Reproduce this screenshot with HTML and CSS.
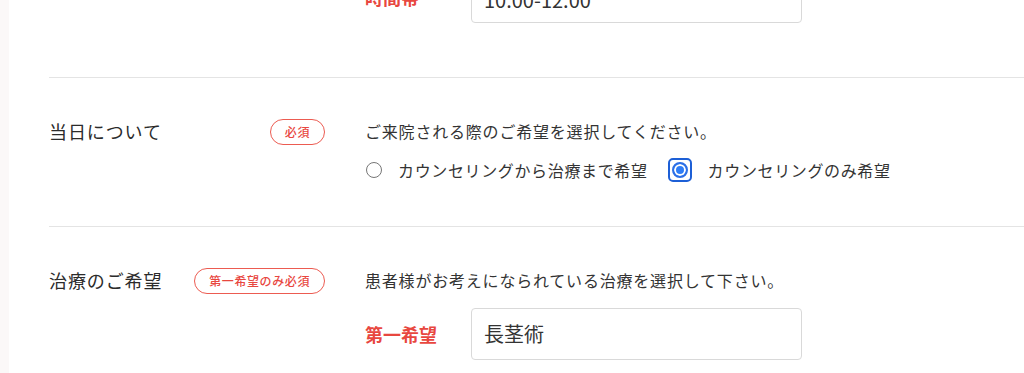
FILE: index.html
```html
<!DOCTYPE html>
<html lang="ja">
<head>
<meta charset="UTF-8">
<meta name="viewport" content="width=device-width, initial-scale=1.0">
<title>ご予約フォーム</title>
<link rel="stylesheet" href="styles.css">
</head>
<body>

<div class="form-panel">

    <!-- 希望日時 (cut off at the top) -->
    <div class="form-row form-row--first">
        <div class="row-head"></div>
        <div class="row-body">
            <div class="sub-field">
                <span class="sub-label">時間帯</span>
                <div class="text-box text-box--low">10:00-12:00</div>
            </div>
        </div>
    </div>

    <!-- 当日について -->
    <div class="form-row">
        <div class="row-head">
            <span class="row-label">当日について</span>
            <span class="badge">必須</span>
        </div>
        <div class="row-body">
            <p class="row-note">ご来院される際のご希望を選択してください。</p>
            <div class="radio-group">
                <label class="radio-option">
                    <span class="radio-mark"></span>
                    カウンセリングから治療まで希望
                </label>
                <label class="radio-option">
                    <span class="radio-focus"><span class="radio-mark is-checked"></span></span>
                    カウンセリングのみ希望
                </label>
            </div>
        </div>
    </div>

    <!-- 治療のご希望 -->
    <div class="form-row">
        <div class="row-head">
            <span class="row-label">治療のご希望</span>
            <span class="badge">第一希望のみ必須</span>
        </div>
        <div class="row-body">
            <p class="row-note">患者様がお考えになられている治療を選択して下さい。</p>
            <div class="sub-field sub-field--spaced">
                <span class="sub-label">第一希望</span>
                <div class="text-box">長茎術</div>
            </div>
        </div>
    </div>

</div>

</body>
</html>
```

FILE: styles.css
```css
/* Base */
body {
    margin: 0;
    background-color: #fbf8f8;
    font-family: "Noto Sans CJK JP", "Noto Sans", sans-serif;
    color: #333;
    overflow: hidden;
}

/* White form panel */
.form-panel {
    margin-top: -29px;
    margin-left: 9px;
    padding-left: 40px;
    background-color: #fff;
    min-height: 500px;
}

/* Rows */
.form-row {
    display: flex;
    align-items: flex-start;
    border-top: 1px solid #e4e4e4;
    padding: 40px 0 43px;
}
.form-row--first {
    border-top: none;
    padding: 0 0 54px;
}

.row-head {
    width: 276px;
    height: 27px;
    display: flex;
    align-items: center;
    justify-content: space-between;
    flex-shrink: 0;
}

.row-label {
    font-size: 18px;
    font-weight: 400;
    color: #2b2b2b;
    letter-spacing: 0.05em;
    line-height: 27px;
}

.badge {
    height: 24px;
    line-height: 24px;
    padding: 0 14px;
    border: 1.5px solid #ec5b51;
    border-radius: 14px;
    color: #e8473f;
    font-size: 12px;
    font-weight: 500;
    letter-spacing: 0.05em;
}

.row-body {
    margin-left: 40px;
}

.row-note {
    margin: 0;
    font-size: 16px;
    line-height: 27px;
    letter-spacing: 0.05em;
}

/* Radio buttons */
.radio-group {
    display: flex;
    margin-top: 12px;
    height: 26px;
    align-items: center;
}
.radio-option {
    display: inline-flex;
    align-items: center;
    gap: 16px;
    margin-right: 20px;
    font-size: 16px;
    letter-spacing: 0.04em;
    cursor: pointer;
}
.radio-mark {
    display: block;
    width: 14px;
    height: 14px;
    margin-left: 1px;
    border: 1px solid #767676;
    border-radius: 50%;
    background-color: #fff;
}
.radio-focus {
    display: block;
    padding: 2px;
    border: 2px solid #1d5fd6;
    border-radius: 5px;
}
.radio-mark.is-checked {
    width: 12px;
    height: 12px;
    margin: 0;
    border: 2px solid #2c6fe6;
    background-color: #2f7df6;
    box-shadow: inset 0 0 0 2px #fff;
}

/* Sub field: label + text box */
.sub-field {
    display: flex;
    align-items: center;
}
.sub-field--spaced {
    margin-top: 14px;
}
.sub-label {
    width: 106px;
    color: #e8473f;
    font-size: 18px;
    font-weight: 700;
}
.text-box {
    width: 305px;
    height: 50px;
    line-height: 50px;
    padding: 0 12px;
    border: 1px solid #d9d9d9;
    border-radius: 4px;
    font-size: 20px;
    color: #333;
}
.text-box--low {
    height: 44px;
    padding-top: 6px;
    line-height: 44px;
}
```
